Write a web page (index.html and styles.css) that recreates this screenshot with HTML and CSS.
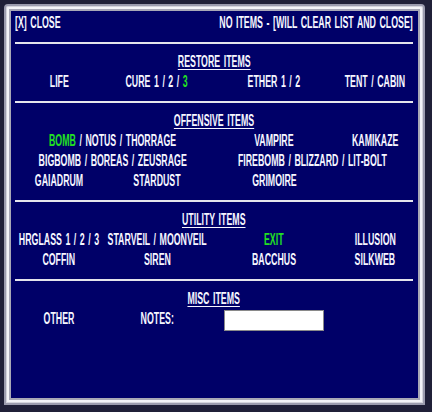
FILE: index.html
```
<!DOCTYPE html>
<html>
<head>
<meta charset="utf-8">
<link rel="stylesheet" href="styles.css">
</head>
<body>
<div class="frame">
  <div class="panel">
    <div class="top">
      <span class="t tl">[X] CLOSE</span>
      <span class="t tr">NO ITEMS - [WILL CLEAR LIST AND CLOSE]</span>
    </div>
    <div class="grid">
      <div class="rule"></div>
      <div class="head"><span class="t u">RESTORE ITEMS</span></div>
      <div class="cell"><span class="t">LIFE</span></div>
      <div class="cell"><span class="t">CURE 1 / 2 / <em class="g">3</em></span></div>
      <div class="cell"><span class="t">ETHER 1 / 2</span></div>
      <div class="cell"><span class="t">TENT / CABIN</span></div>

      <div class="rule"></div>
      <div class="head"><span class="t u">OFFENSIVE ITEMS</span></div>
      <div class="cell s2"><span class="t"><em class="g">BOMB</em> / NOTUS / THORRAGE</span></div>
      <div class="cell"><span class="t">VAMPIRE</span></div>
      <div class="cell"><span class="t">KAMIKAZE</span></div>
      <div class="cell s2"><span class="t">BIGBOMB / BOREAS / ZEUSRAGE</span></div>
      <div class="cell s2"><span class="t">FIREBOMB / BLIZZARD / LIT-BOLT</span></div>
      <div class="cell"><span class="t">GAIADRUM</span></div>
      <div class="cell"><span class="t">STARDUST</span></div>
      <div class="cell"><span class="t">GRIMOIRE</span></div>
      <div class="cell"></div>

      <div class="rule"></div>
      <div class="head"><span class="t u">UTILITY ITEMS</span></div>
      <div class="cell"><span class="t">HRGLASS 1 / 2 / 3</span></div>
      <div class="cell"><span class="t">STARVEIL / MOONVEIL</span></div>
      <div class="cell"><span class="t"><em class="g">EXIT</em></span></div>
      <div class="cell"><span class="t">ILLUSION</span></div>
      <div class="cell"><span class="t">COFFIN</span></div>
      <div class="cell"><span class="t">SIREN</span></div>
      <div class="cell"><span class="t">BACCHUS</span></div>
      <div class="cell"><span class="t">SILKWEB</span></div>

      <div class="rule"></div>
      <div class="head"><span class="t u">MISC ITEMS</span></div>
      <div class="cell"><span class="t">OTHER</span></div>
      <div class="cell"><span class="t">NOTES:</span></div>
      <div class="cell"><input class="notes" type="text"></div>
      <div class="cell"></div>
    </div>
  </div>
</div>
</body>
</html>
```
FILE: styles.css
```
html, body {
  margin: 0;
  padding: 0;
}
body {
  width: 432px;
  height: 412px;
  overflow: hidden;
  background: #202038;
  font-family: "Liberation Sans", Arial, sans-serif;
  font-weight: bold;
  font-size: 16px;
  line-height: 20px;
  word-spacing: 2px;
  color: #f6f6ff;
}
.frame {
  margin: 4px 0 0 4px;
  width: 421px;
  height: 401px;
  box-sizing: border-box;
  border: 2px solid #9c9cae;
  border-radius: 4px 4px 0 0;
  background: #f4f4f8;
  padding: 3px;
  box-shadow: inset 0 0 0 1px #d4d4dc;
}
.panel {
  height: 100%;
  box-sizing: border-box;
  border: 2px solid #a8a8b6;
  background: #000068;
  padding: 2px 5px 0 4px;
}
.top {
  display: flex;
  height: 20px;
}
.t {
  display: inline-block;
  white-space: nowrap;
  transform: scaleX(0.55);
}
.tl {
  flex: none;
  width: 0;
  transform-origin: left center;
}
.tr {
  flex: none;
  margin-left: auto;
  transform-origin: right center;
}
.grid {
  display: grid;
  grid-template-columns: 88px 108px 126px 76px;
}
.rule {
  grid-column: 1 / -1;
  height: 2px;
  background: #e4e4ec;
  margin: 9px 0 8px;
}
.head {
  grid-column: 1 / -1;
  display: flex;
  justify-content: center;
  height: 20px;
}
.cell {
  display: flex;
  justify-content: center;
  height: 20px;
}
.s2 { grid-column: span 2; }
.u {
  text-decoration: underline;
  text-decoration-thickness: 1px;
  text-underline-offset: 2px;
}
.g {
  color: #22e022;
  font-style: normal;
}
.notes {
  width: 100px;
  height: 21px;
  box-sizing: border-box;
  margin: 1px 0 0;
  padding: 0;
  border: 1px solid #8a8a8a;
  background: #fff;
}
```
